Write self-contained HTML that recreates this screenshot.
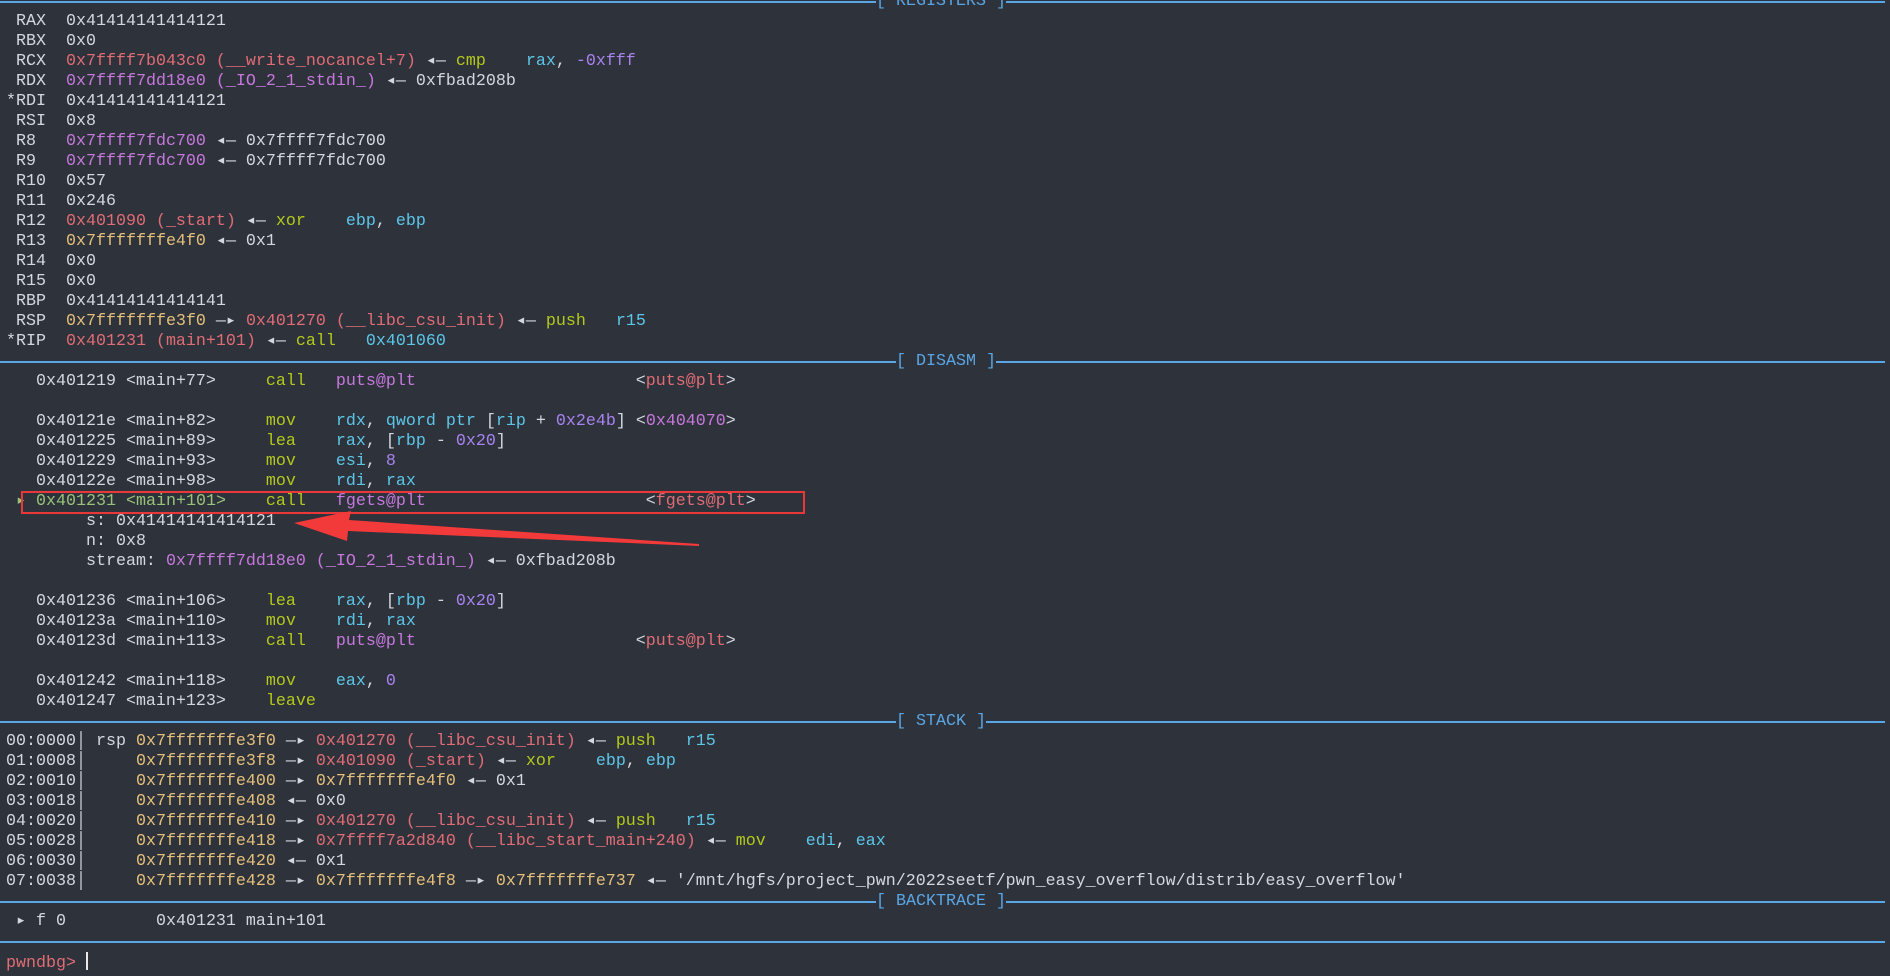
<!DOCTYPE html>
<html><head><meta charset="utf-8"><style>
html,body{margin:0;padding:0;background:#2e323b;width:1890px;height:976px;overflow:hidden}
#t{position:absolute;left:6px;top:-8px;font-family:"Liberation Mono","DejaVu Sans Mono",monospace;font-size:16.67px;line-height:20px;color:#d3d7de}
.r{height:20px;position:relative;white-space:pre}
.h{position:relative;height:20px;white-space:pre}
.h i{position:absolute;left:-6px;width:1885px;top:9px;height:2px;background:#5aa5e3}
.h b{position:absolute;top:0;font-weight:normal;color:#5aa5e3;background:#2e323b}
.R{color:#e06c75}.Y{color:#e5c07b}.P{color:#c678dd}.G{color:#b3c91b}.C{color:#5cc6e8}.N{color:#a883f0}.L{color:#98c379}
</style></head><body>
<div id="t"><div class="h"><i></i><b style="left:870px">[ REGISTERS ]</b></div><div class="r"> RAX  0x41414141414121</div><div class="r"> RBX  0x0</div><div class="r"> RCX  <span class="R">0x7ffff7b043c0 (__write_nocancel+7)</span> ◂— <span class="G">cmp</span>    <span class="C">rax</span>, <span class="N">-0xfff</span></div><div class="r"> RDX  <span class="P">0x7ffff7dd18e0 (_IO_2_1_stdin_)</span> ◂— 0xfbad208b</div><div class="r">*RDI  0x41414141414121</div><div class="r"> RSI  0x8</div><div class="r"> R8   <span class="P">0x7ffff7fdc700</span> ◂— 0x7ffff7fdc700</div><div class="r"> R9   <span class="P">0x7ffff7fdc700</span> ◂— 0x7ffff7fdc700</div><div class="r"> R10  0x57</div><div class="r"> R11  0x246</div><div class="r"> R12  <span class="R">0x401090 (_start)</span> ◂— <span class="G">xor</span>    <span class="C">ebp</span>, <span class="C">ebp</span></div><div class="r"> R13  <span class="Y">0x7fffffffe4f0</span> ◂— 0x1</div><div class="r"> R14  0x0</div><div class="r"> R15  0x0</div><div class="r"> RBP  0x41414141414141</div><div class="r"> RSP  <span class="Y">0x7fffffffe3f0</span> —▸ <span class="R">0x401270 (__libc_csu_init)</span> ◂— <span class="G">push</span>   <span class="C">r15</span></div><div class="r">*RIP  <span class="R">0x401231 (main+101)</span> ◂— <span class="G">call</span>   <span class="C">0x401060</span></div><div class="h"><i></i><b style="left:890px">[ DISASM ]</b></div><div class="r">   0x401219 &lt;main+77&gt;     <span class="G">call</span>   <span class="P">puts@plt</span>                      &lt;<span class="R">puts@plt</span>&gt;</div><div class="r"> </div><div class="r">   0x40121e &lt;main+82&gt;     <span class="G">mov</span>    <span class="C">rdx</span>, <span class="C">qword ptr</span> [<span class="C">rip</span> + <span class="N">0x2e4b</span>] &lt;<span class="P">0x404070</span>&gt;</div><div class="r">   0x401225 &lt;main+89&gt;     <span class="G">lea</span>    <span class="C">rax</span>, [<span class="C">rbp</span> - <span class="N">0x20</span>]</div><div class="r">   0x401229 &lt;main+93&gt;     <span class="G">mov</span>    <span class="C">esi</span>, <span class="N">8</span></div><div class="r">   0x40122e &lt;main+98&gt;     <span class="G">mov</span>    <span class="C">rdi</span>, <span class="C">rax</span></div><div class="r"> <span class="L">▸ 0x401231 &lt;main+101&gt;</span>    <span class="G">call</span>   <span class="P">fgets@plt</span>                      &lt;<span class="R">fgets@plt</span>&gt;</div><div class="r">        s: 0x41414141414121</div><div class="r">        n: 0x8</div><div class="r">        stream: <span class="P">0x7ffff7dd18e0 (_IO_2_1_stdin_)</span> ◂— 0xfbad208b</div><div class="r"> </div><div class="r">   0x401236 &lt;main+106&gt;    <span class="G">lea</span>    <span class="C">rax</span>, [<span class="C">rbp</span> - <span class="N">0x20</span>]</div><div class="r">   0x40123a &lt;main+110&gt;    <span class="G">mov</span>    <span class="C">rdi</span>, <span class="C">rax</span></div><div class="r">   0x40123d &lt;main+113&gt;    <span class="G">call</span>   <span class="P">puts@plt</span>                      &lt;<span class="R">puts@plt</span>&gt;</div><div class="r"> </div><div class="r">   0x401242 &lt;main+118&gt;    <span class="G">mov</span>    <span class="C">eax</span>, <span class="N">0</span></div><div class="r">   0x401247 &lt;main+123&gt;    <span class="G">leave</span></div><div class="h"><i></i><b style="left:890px">[ STACK ]</b></div><div class="r">00:0000│ rsp <span class="Y">0x7fffffffe3f0</span> —▸ <span class="R">0x401270 (__libc_csu_init)</span> ◂— <span class="G">push</span>   <span class="C">r15</span></div><div class="r">01:0008│     <span class="Y">0x7fffffffe3f8</span> —▸ <span class="R">0x401090 (_start)</span> ◂— <span class="G">xor</span>    <span class="C">ebp</span>, <span class="C">ebp</span></div><div class="r">02:0010│     <span class="Y">0x7fffffffe400</span> —▸ <span class="Y">0x7fffffffe4f0</span> ◂— 0x1</div><div class="r">03:0018│     <span class="Y">0x7fffffffe408</span> ◂— 0x0</div><div class="r">04:0020│     <span class="Y">0x7fffffffe410</span> —▸ <span class="R">0x401270 (__libc_csu_init)</span> ◂— <span class="G">push</span>   <span class="C">r15</span></div><div class="r">05:0028│     <span class="Y">0x7fffffffe418</span> —▸ <span class="R">0x7ffff7a2d840 (__libc_start_main+240)</span> ◂— <span class="G">mov</span>    <span class="C">edi</span>, <span class="C">eax</span></div><div class="r">06:0030│     <span class="Y">0x7fffffffe420</span> ◂— 0x1</div><div class="r">07:0038│     <span class="Y">0x7fffffffe428</span> —▸ <span class="Y">0x7fffffffe4f8</span> —▸ <span class="Y">0x7fffffffe737</span> ◂— '/mnt/hgfs/project_pwn/2022seetf/pwn_easy_overflow/distrib/easy_overflow'</div><div class="h"><i></i><b style="left:870px">[ BACKTRACE ]</b></div><div class="r"> ▸ f 0         0x401231 main+101</div><div class="h"><i></i></div><div class="r"><span class="R">pwndbg&gt;</span> <span style="display:inline-block;width:2px;height:18px;background:#e8e8e8;vertical-align:-3px"></span></div></div>
<div style="position:absolute;left:21px;top:491px;width:780px;height:19px;border:2.5px solid #e8383a"></div>
<svg style="position:absolute;left:0;top:0" width="1890" height="976"><polygon points="294,523 351,511 349,520 699,544 699,546 348,531 347,541" fill="#f23a3a"/></svg>
</body></html>
